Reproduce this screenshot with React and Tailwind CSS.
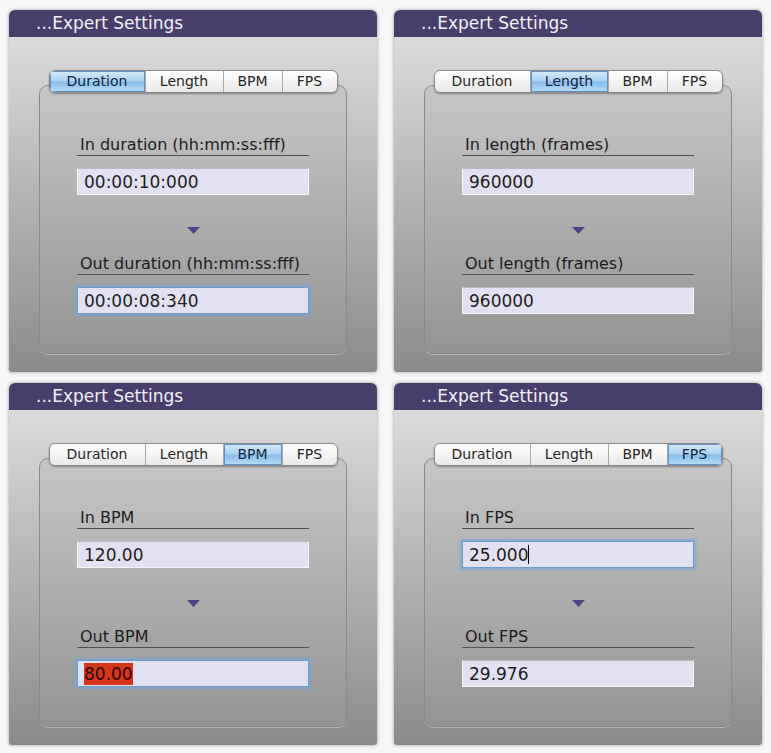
import React from "react";

const TABS = [
  ["Duration", 95],
  ["Length", 78],
  ["BPM", 59],
  ["FPS", 55],
];

const font = { fontFamily: '"DejaVu Sans", Verdana, sans-serif' };

const TabBar = ({ active }) => {
  return (
    <div className="relative z-10 self-center flex h-[23px] rounded-[6px] border border-[#8b8b8b] bg-gradient-to-b from-[#ffffff] to-[#e9e9e9] shadow-[0_1px_2px_rgba(0,0,0,0.35)] overflow-hidden">
      {TABS.map(([name, w], i) => {
        const on = name === active;
        return (
          <div
            key={name}
            style={{ width: w }}
            className={`flex items-center justify-center text-[14px] leading-[21px] ${
              i > 0 ? "border-l border-[#a9a9a9]" : ""
            } ${
              on
                ? "bg-[linear-gradient(to_bottom,#d6ebfa_0%,#a9d2f2_48%,#86bdea_52%,#b9def8_100%)] text-[#14223a] shadow-[inset_0_0_0_1px_#5f91c6]"
                : "text-[#262626]"
            }`}
          >
            {name}
          </div>
        );
      })}
    </div>
  );
};

const Field = ({ value, focused, selected, caret }) => {
  return (
    <div
      className={`h-[27px] flex items-center pl-[6px] text-[17px] text-[#1e1e1e] bg-[#e1e1f2] ${
        focused
          ? "border border-[#6f9ccb] shadow-[0_0_2px_2px_rgba(122,166,214,0.8)]"
          : "border border-[#f4f4f7] border-t-[#b9b9c2]"
      }`}
    >
      {selected ? (
        <span className="bg-[#d8361b] text-[#2b0700] leading-[22px]">{value}</span>
      ) : (
        <span className="leading-[22px]">{value}</span>
      )}
      {caret && <span className="w-px h-[19px] bg-black" />}
    </div>
  );
};

const Label = ({ children }) => (
  <div className="border-b border-[#505050] pl-[3px] pb-px text-[16px] leading-[19px] text-[#1c1c1c]">
    {children}
  </div>
);

const Panel = ({ active, inLabel, inValue, outLabel, outValue, focus, selectedOut, caretIn }) => {
  return (
    <div
      style={font}
      className="w-[368px] h-[362px] flex flex-col rounded-t-[6px] rounded-b-[3px] overflow-hidden bg-gradient-to-b from-[#e2e2e2] to-[#8b8b8b] shadow-[0_0_3px_1px_rgba(0,0,0,0.22)]"
    >
      {/* title bar */}
      <div className="h-[27px] shrink-0 bg-[#483e6e] text-[#f1f1f4] text-[17px] leading-[27px] pl-[27px]">
        ...Expert Settings
      </div>

      <div className="flex flex-col px-[30px] pt-[33px] pb-[20px]">
        <TabBar active={active} />

        {/* group box */}
        <div className="-mt-[8px] rounded-[9px] border border-[#8a8a8a] bg-gradient-to-b from-[#c7c7c7] to-[#949494] shadow-[0_1px_0_rgba(255,255,255,0.35)] px-[37px] pt-[49px] pb-[39px]">
          <Label>{inLabel}</Label>
          <div className="mt-[12px]">
            <Field value={inValue} focused={focus === "in"} caret={caretIn} />
          </div>

          <div className="mt-[32px] flex justify-center">
            <svg width="13" height="7" viewBox="0 0 13 7">
              <polygon points="0,0 13,0 6.5,7" fill="#4d4483" />
            </svg>
          </div>

          <div className="mt-[20px]">
            <Label>{outLabel}</Label>
          </div>
          <div className="mt-[12px]">
            <Field value={outValue} focused={focus === "out"} selected={selectedOut} />
          </div>
        </div>
      </div>
    </div>
  );
};

export default function App() {
  return (
    <div className="w-[771px] h-[753px] bg-[#f6f6f6] pl-[9px] pt-[10px]">
      <div className="grid grid-cols-[368px_368px] gap-x-[17px] gap-y-[11px]">
        <Panel
          active="Duration"
          inLabel="In duration (hh:mm:ss:fff)"
          inValue="00:00:10:000"
          outLabel="Out duration (hh:mm:ss:fff)"
          outValue="00:00:08:340"
          focus="out"
        />
        <Panel
          active="Length"
          inLabel="In length (frames)"
          inValue="960000"
          outLabel="Out length (frames)"
          outValue="960000"
        />
        <Panel
          active="BPM"
          inLabel="In BPM"
          inValue="120.00"
          outLabel="Out BPM"
          outValue="80.00"
          focus="out"
          selectedOut
        />
        <Panel
          active="FPS"
          inLabel="In FPS"
          inValue="25.000"
          outLabel="Out FPS"
          outValue="29.976"
          focus="in"
          caretIn
        />
      </div>
    </div>
  );
}
